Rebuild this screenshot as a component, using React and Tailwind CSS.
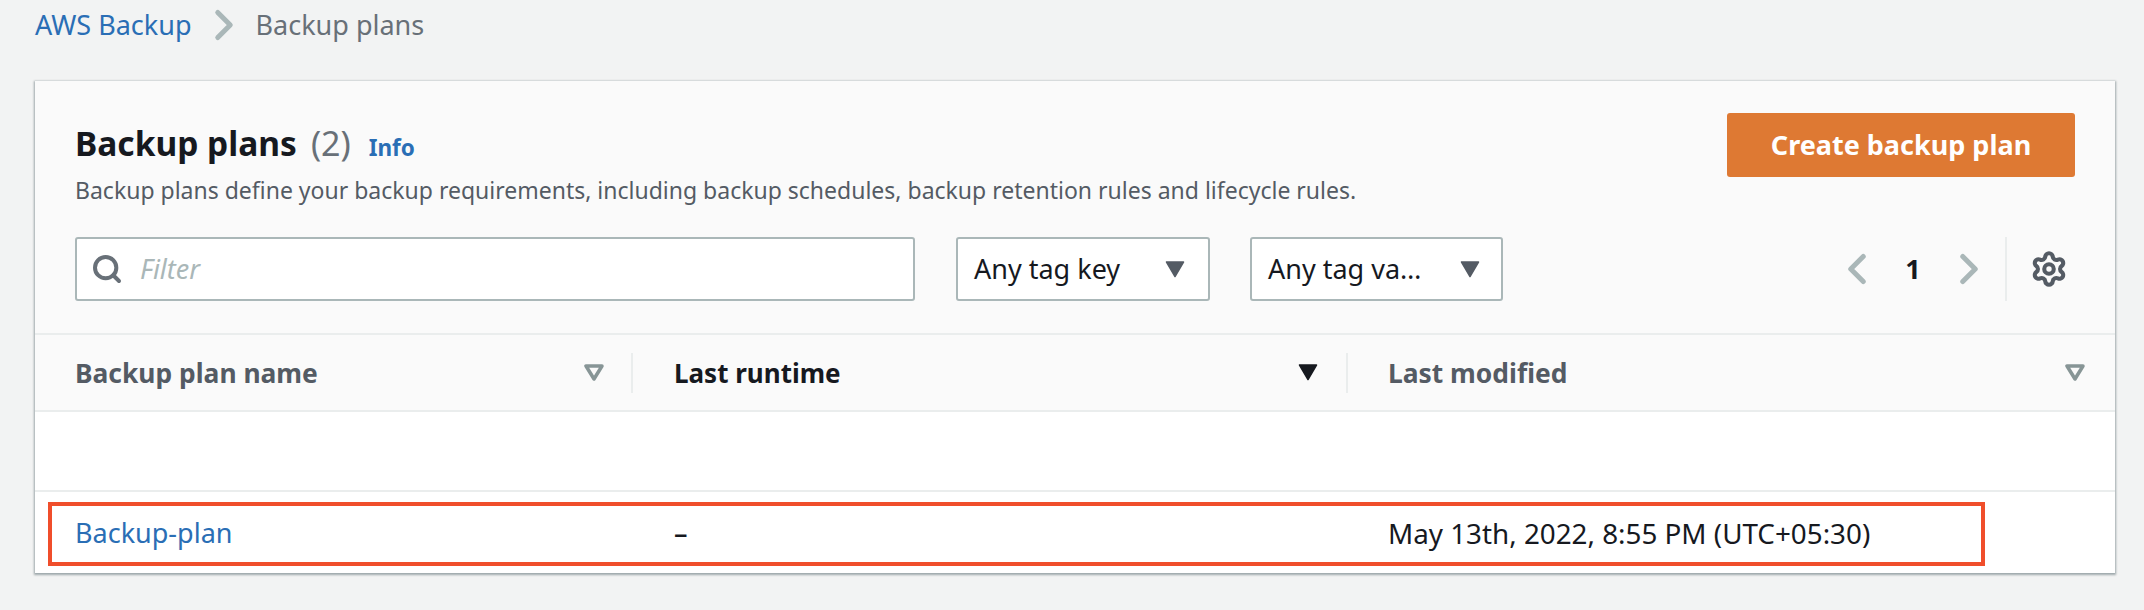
import React from 'react';
import { Search, ChevronLeft, ChevronRight, Settings } from 'lucide-react';

const font = { fontFamily: '"Noto Sans", Arial, sans-serif' };

const Caret = ({ color = '#545b64', outline = false }) => (
  <svg width="20" height="17" viewBox="0 0 20 17" className="shrink-0">
    {outline ? (
      <path d="M2 2h16L10 15z" fill="none" stroke={color} strokeWidth="3.5" strokeLinejoin="round" />
    ) : (
      <path d="M1.5 1h17L10 15.5z" fill={color} stroke={color} strokeWidth="1.5" strokeLinejoin="round" />
    )}
  </svg>
);

const SelectBox = ({ label, width, pr }) => (
  <div className={`${width} ${pr} h-[64px] flex items-center justify-between pl-[16px] bg-white border-2 border-[#aab7b8] rounded-[3px] text-[#16191f] text-[27px]`}>
    <span>{label}</span>
    <Caret />
  </div>
);

const App = () => {
  return (
    <div style={font} className="w-[2144px] h-[610px] bg-[#f2f3f3] overflow-hidden">
      <div className="h-[81px] pl-[35px] flex items-start text-[27px] leading-[50px]">
        <span className="text-[#2a6eb5]">AWS Backup</span>
        <ChevronRight className="w-[50px] h-[50px] mx-[7px] text-[#aab7b8]" strokeWidth={2.4} />
        <span className="text-[#687078]">Backup plans</span>
      </div>

      <div className="ml-[35px] w-[2080px] h-[492px] bg-white shadow-[0_1px_2px_1px_rgba(0,28,36,0.35)]">
        <div className="h-[254px] bg-[#fafafa] border-b-2 border-[#eaeded] px-[40px] pt-[32px]">
          <div className="flex justify-between items-start h-[124px]">
            <div>
              <div className="flex items-baseline h-[61px] pt-[7px] leading-[46px]">
                <span className="text-[#16191f] text-[33.5px] font-bold">Backup plans</span>
                <span className="text-[#687078] text-[34px] ml-[14px]">(2)</span>
                <span className="text-[#2a6eb5] text-[22.5px] font-bold ml-[18px]">Info</span>
              </div>
              <p className="text-[#545b64] text-[23px] leading-[32px] whitespace-nowrap">
                Backup plans define your backup requirements, including backup schedules, backup retention rules and lifecycle rules.
              </p>
            </div>
            <div className="w-[348px] h-[64px] bg-[#de7933] rounded-[3px] flex items-center justify-center text-white text-[27px] font-bold">
              Create backup plan
            </div>
          </div>

          <div className="flex items-center h-[64px]">
            <div className="w-[840px] h-[64px] flex items-center bg-white border-2 border-[#aab7b8] rounded-[3px] pl-[14px]">
              <Search className="w-[32px] h-[32px] text-[#687078]" strokeWidth={3} />
              <span className="text-[#aab7b8] italic text-[27px] ml-[17px]">Filter</span>
            </div>
            <div className="ml-[41px]">
              <SelectBox label="Any tag key" width="w-[254px]" pr="pr-[23px]" />
            </div>
            <div className="ml-[40px]">
              <SelectBox label="Any tag va…" width="w-[253px]" pr="pr-[21px]" />
            </div>
            <div className="flex-1 flex items-center justify-end h-[64px]">
              <ChevronLeft className="w-[50px] h-[50px] text-[#aab7b8]" strokeWidth={2.4} />
              <span className="text-[#16191f] text-[27px] font-bold w-[62px] text-center">1</span>
              <ChevronRight className="w-[50px] h-[50px] text-[#aab7b8]" strokeWidth={2.4} />
              <div className="w-[2px] h-[64px] bg-[#eaeded] ml-[11px]" />
              <Settings className="w-[38px] h-[38px] text-[#545b64] ml-[23px] mr-[7px]" strokeWidth={2.6} />
            </div>
          </div>
        </div>

        <div className="h-[77px] bg-[#fafafa] border-b-2 border-[#eaeded] grid grid-cols-[598px_715px_1fr] text-[26.4px] font-bold items-center">
          <div className="flex items-center justify-between pl-[40px] pr-[27px] border-r-2 border-[#eaeded] h-[40px] text-[#545b64]">
            <span className="pt-[2px]">Backup plan name</span>
            <Caret color="#879596" outline />
          </div>
          <div className="flex items-center justify-between pl-[41px] pr-[28px] border-r-2 border-[#eaeded] h-[40px] text-[#16191f]">
            <span className="pt-[2px] text-[26px]">Last runtime</span>
            <Caret color="#16191f" />
          </div>
          <div className="flex items-center justify-between pl-[40px] pr-[30px] text-[#545b64]">
            <span className="pt-[2px]">Last modified</span>
            <Caret color="#879596" outline />
          </div>
        </div>

        <div className="h-[80px] border-b-2 border-[#eaeded]" />

        <div className="relative h-[81px] grid grid-cols-[598px_715px_1fr] items-center text-[27px] text-[#16191f]">
          <div className="pl-[40px] pt-[2px] text-[#2a6eb5]">Backup-plan</div>
          <div className="pl-[41px] pt-[2px] font-medium">–</div>
          <div className="pl-[40px] pt-[2px] text-[27.8px] whitespace-nowrap">May 13th, 2022, 8:55 PM (UTC+05:30)</div>
          <div className="absolute left-[13px] top-[10px] w-[1937px] h-[64px] border-[4px] border-[#f04e2b]" />
        </div>
      </div>
    </div>
  );
};

export default App;
